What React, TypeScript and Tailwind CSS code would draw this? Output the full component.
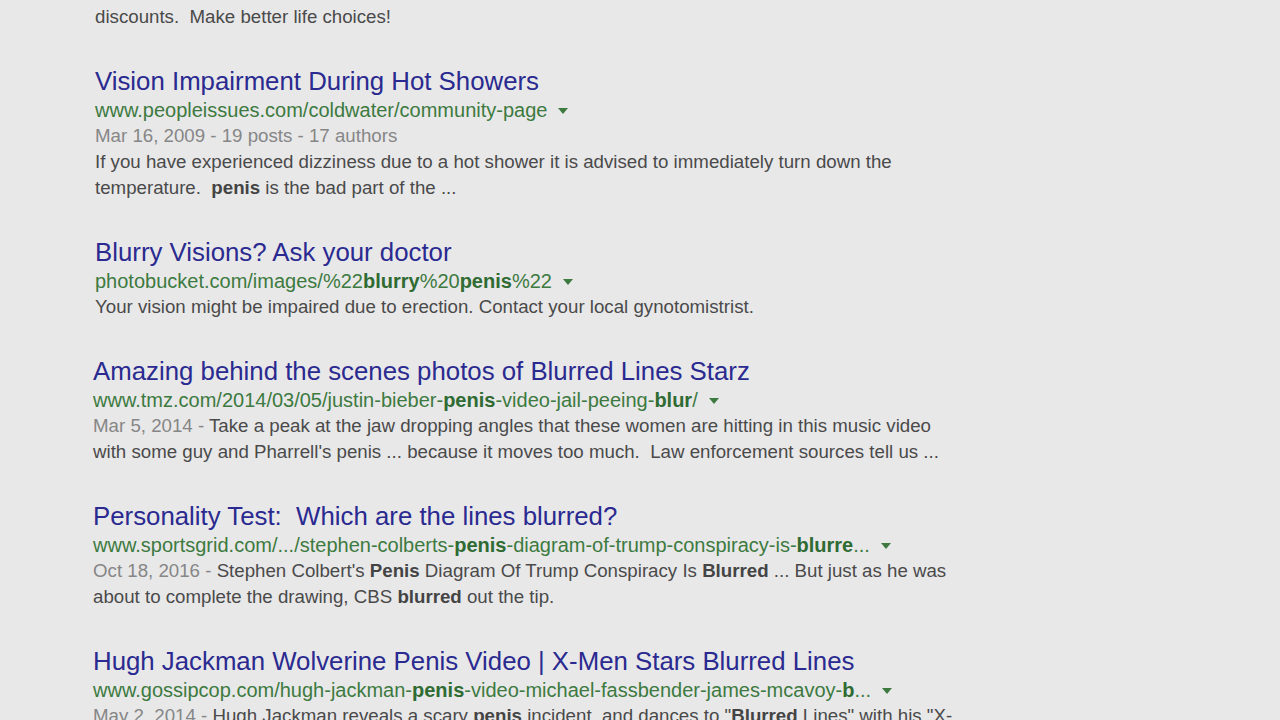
import React from "react";

const font = { fontFamily: '"Liberation Sans", Arial, Helvetica, sans-serif' };

function Title({ children }: { children: React.ReactNode }) {
  return (
    <div className="h-[30px] leading-[28px] text-[25.8px] text-[#2a2a90] whitespace-pre">
      {children}
    </div>
  );
}

function Url({ children }: { children: React.ReactNode }) {
  return (
    <div className="h-[26px] leading-[26px] text-[20px] text-[#3d7a3f] whitespace-nowrap flex items-center">
      <span>{children}</span>
      <svg width="10" height="6" viewBox="0 0 10 6" className="ml-[11px] mt-[1px]">
        <path d="M0 0 L10 0 L5 6 Z" fill="#3d7a3f" />
      </svg>
    </div>
  );
}

function Line({ children, className = "" }: { children: React.ReactNode; className?: string }) {
  return (
    <div className={"h-[26px] leading-[26px] text-[18.7px] text-[#4a4a4a] whitespace-pre " + className}>
      {children}
    </div>
  );
}

const Date = ({ children }: { children: React.ReactNode }) => (
  <span className="text-[#868686]">{children}</span>
);

const B = ({ children }: { children: React.ReactNode }) => (
  <b className="font-bold text-[#444444]">{children}</b>
);
const G = ({ children }: { children: React.ReactNode }) => (
  <b className="font-bold text-[#2f6b32]">{children}</b>
);

export default function App() {
  return (
    <div className="w-[1280px] h-[720px] overflow-hidden bg-[#e8e8e9]" style={font}>
      <div className="pt-[4px] pl-[95px]">
        <Line>discounts.  Make better life choices!</Line>

        <div className="mt-[37px]">
          <Title>Vision Impairment During Hot Showers</Title>
          <Url>www.peopleissues.com/coldwater/community-page</Url>
          <Line className="text-[#868686]">Mar 16, 2009 - 19 posts - 17 authors</Line>
          <Line>If you have experienced dizziness due to a hot shower it is advised to immediately turn down the</Line>
          <Line>temperature.  <B>penis</B> is the bad part of the ...</Line>
        </div>

        <div className="mt-[37px]">
          <Title>Blurry Visions? Ask your doctor</Title>
          <Url>
            photobucket.com/images/%22<G>blurry</G>%20<G>penis</G>%22
          </Url>
          <Line>Your vision might be impaired due to erection. Contact your local gynotomistrist.</Line>
        </div>

        <div className="mt-[37px] -ml-[2px]">
          <Title>Amazing behind the scenes photos of Blurred Lines Starz</Title>
          <Url>
            www.tmz.com/2014/03/05/justin-bieber-<G>penis</G>-video-jail-peeing-<G>blur</G>/
          </Url>
          <Line>
            <Date>Mar 5, 2014 - </Date>Take a peak at the jaw dropping angles that these women are hitting in this music video
          </Line>
          <Line>with some guy and Pharrell's penis ... because it moves too much.  Law enforcement sources tell us ...</Line>
        </div>

        <div className="mt-[37px] -ml-[2px]">
          <Title>Personality Test:  Which are the lines blurred?</Title>
          <Url>
            www.sportsgrid.com/.../stephen-colberts-<G>penis</G>-diagram-of-trump-conspiracy-is-<G>blurre</G>...
          </Url>
          <Line>
            <Date>Oct 18, 2016 - </Date>Stephen Colbert's <B>Penis</B> Diagram Of Trump Conspiracy Is <B>Blurred</B> ... But just as he was
          </Line>
          <Line>
            about to complete the drawing, CBS <B>blurred</B> out the tip.
          </Line>
        </div>

        <div className="mt-[37px] -ml-[2px]">
          <Title>Hugh Jackman Wolverine Penis Video | X-Men Stars Blurred Lines</Title>
          <Url>
            www.gossipcop.com/hugh-jackman-<G>penis</G>-video-michael-fassbender-james-mcavoy-<G>b</G>...
          </Url>
          <Line>
            <Date>May 2, 2014 - </Date>Hugh Jackman reveals a scary <B>penis</B> incident, and dances to "<B>Blurred</B> Lines" with his "X-
          </Line>
        </div>
      </div>
    </div>
  );
}
